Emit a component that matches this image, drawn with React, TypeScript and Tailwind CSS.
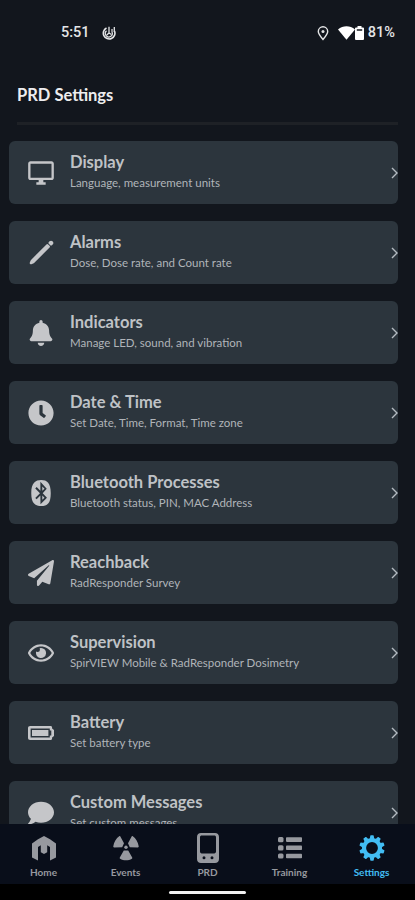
import type { ComponentType, ReactNode } from "react";
import {
  FaBell,
  FaBluetooth,
  FaClock,
  FaComment,
  FaPaperPlane,
  FaRegEye,
} from "react-icons/fa";
import { IoPencil } from "react-icons/io5";
import { MdOutlineDesktopWindows } from "react-icons/md";

interface IconProps {
  className?: string;
}

interface SettingsItem {
  title: string;
  subtitle: string;
  icon: ComponentType<IconProps>;
  iconClass: string;
  titleClass: string;
  subtitleClass: string;
}

function BatteryIcon({ className }: IconProps) {
  return (
    <svg viewBox="0 0 26 14" className={className} fill="currentColor">
      <path
        fillRule="evenodd"
        d="M2.2 0h20.2c1.2 0 1.7.6 1.7 1.8v.8L26 4v6l-1.900 1.400v.8c0 1.200-.5 1.800-1.700 1.800H2.200C.8 14 0 13.200 0 11.800V2.200C0 .8.800 0 2.200 0Zm.4 2.400v9.200h19.200V9.500h1.500v-5h-1.500V2.400Z"
      />
      <path d="M4 4h16.400v6H4z" />
    </svg>
  );
}

function HomeIcon() {
  return (
    <svg viewBox="0 0 24 25" className="h-[25px] w-6" fill="currentColor">
      <path d="M12 0 18 3.200 24 7.500V21.500L18 24.500V11L15.200 9.200V16.200L12 18 8.800 16.200V9.200L6 11V24.500L0 21.500V7.500L6 3.200Z" />
    </svg>
  );
}

function RadiationIcon() {
  return (
    <svg viewBox="0 0 26 26" className="size-[26px]" fill="currentColor">
      <path d="M7.200 1.200 11 8.300 9.200 12.300 1.200 12.500C.4 12.500.2 12 .3 11.300.9 7 3.200 3.300 6.200 1.200c.4-.3.8-.3 1 0Z" />
      <path d="M18.800 1.200 15 8.300 16.800 12.300 24.800 12.500c.8 0 1-.5.9-1.200C25.100 7 22.800 3.300 19.800 1.200c-.4-.3-.8-.3-1 0Z" />
      <path d="M10.800 15.600h4.400l4 6.900c.3.500.1.900-.3 1.200-3.500 2.200-8.300 2.200-11.800 0-.4-.3-.6-.7-.3-1.200Z" />
      <circle cx="13" cy="12.200" r="1.700" />
    </svg>
  );
}

function DeviceIcon() {
  return (
    <svg viewBox="0 0 22 30" className="h-[30px] w-[22px]" fill="currentColor">
      <path
        fillRule="evenodd"
        d="M4 0h14c2.400 0 4 1.600 4 4v22c0 2.400-1.600 4-4 4H4c-2.400 0-4-1.600-4-4V4C0 1.600 1.600 0 4 0Zm.8 2.600C3.600 2.600 3 3.200 3 4.400v14.200c0 1.200.6 1.800 1.800 1.800h12.400c1.200 0 1.800-.6 1.800-1.800V4.400c0-1.200-.6-1.800-1.800-1.800ZM5.500 24.800a1.500 1.500 0 1 0 3 0 1.500 1.500 0 1 0-3 0Zm8 0a1.500 1.500 0 1 0 3 0 1.500 1.500 0 1 0-3 0Z"
      />
    </svg>
  );
}

function ListIcon() {
  return (
    <svg viewBox="0 0 24 22" className="h-[22px] w-6" fill="currentColor">
      {[0, 8.200, 16.400].map((y) => (
        <g key={y}>
          <rect x="0" y={y} width="5.500" height="5.200" rx="1.500" />
          <rect x="8" y={y + 0.300} width="16" height="4.600" rx="0.800" />
        </g>
      ))}
    </svg>
  );
}

function GearIcon() {
  const teeth = Array.from({ length: 10 }, (_, i) => i * 36);
  return (
    <svg viewBox="-13 -13 26 26" className="size-[26px]" fill="currentColor">
      <circle r="8" fill="none" stroke="currentColor" strokeWidth="4.200" />
      {teeth.map((angle) => (
        <path
          key={angle}
          d="M-2.300-9-1.700-12.300Q-1.600-12.700-1.200-12.700H1.200Q1.600-12.700 1.700-12.300L2.300-9Z"
          transform={`rotate(${angle})`}
        />
      ))}
    </svg>
  );
}

const items: SettingsItem[] = [
  {
    title: "Display",
    subtitle: "Language, measurement units",
    icon: MdOutlineDesktopWindows,
    iconClass: "size-7",
    titleClass: "",
    subtitleClass: "",
  },
  {
    title: "Alarms",
    subtitle: "Dose, Dose rate, and Count rate",
    icon: IoPencil,
    iconClass: "size-[29px]",
    titleClass: "",
    subtitleClass: "",
  },
  {
    title: "Indicators",
    subtitle: "Manage LED, sound, and vibration",
    icon: FaBell,
    iconClass: "size-[26px]",
    titleClass: "",
    subtitleClass: "",
  },
  {
    title: "Date & Time",
    subtitle: "Set Date, Time, Format, Time zone",
    icon: FaClock,
    iconClass: "size-[26px]",
    titleClass: "",
    subtitleClass: "",
  },
  {
    title: "Bluetooth Processes",
    subtitle: "Bluetooth status, PIN, MAC Address",
    icon: FaBluetooth,
    iconClass: "size-[26px]",
    titleClass: "",
    subtitleClass: "",
  },
  {
    title: "Reachback",
    subtitle: "RadResponder Survey",
    icon: FaPaperPlane,
    iconClass: "size-[26px]",
    titleClass: "",
    subtitleClass: "",
  },
  {
    title: "Supervision",
    subtitle: "SpirVIEW Mobile & RadResponder Dosimetry",
    icon: FaRegEye,
    iconClass: "size-[26px]",
    titleClass: "",
    subtitleClass: "",
  },
  {
    title: "Battery",
    subtitle: "Set battery type",
    icon: BatteryIcon,
    iconClass: "h-[14px] w-[26px]",
    titleClass: "",
    subtitleClass: "",
  },
  {
    title: "Custom Messages",
    subtitle: "Set custom messages",
    icon: FaComment,
    iconClass: "size-[26px]",
    titleClass: "",
    subtitleClass: "",
  },
];

function StatusBar() {
  return (
    <div className="flex h-[66px] shrink-0 items-center pl-[61px] pr-5 font-['Roboto',sans-serif] text-[14.500px] font-medium text-[#e4e5e7]">
      <span>5:51</span>
      <svg viewBox="0 0 14 14" className="ml-3 size-[14px]" fill="none" stroke="currentColor">
        <path d="M4.500 2A5.800 5.800 0 1 0 12.500 5" strokeWidth="1.600" />
        <path d="M4.500 4.800A3.500 3.500 0 1 0 10 6V3" strokeWidth="1.200" />
        <path d="M7 .8V7L4.800 9M7 7l2.500 1.500M12.300 1v5" strokeWidth="1.300" />
      </svg>
      <svg viewBox="0 0 12 15" className="ml-auto h-[15px] w-3" fill="none" stroke="currentColor">
        <path d="M6 13.500C3.500 10.500 1.300 8 1.300 5.500a4.700 4.700 0 0 1 9.400 0C10.700 8 8.500 10.500 6 13.500Z" strokeWidth="1.400" />
        <circle cx="6" cy="5.600" r="1.500" fill="currentColor" stroke="none" />
      </svg>
      <svg viewBox="0 0 17 14" className="ml-[9px] h-[14px] w-[17px]" fill="#fff">
        <path d="M0 3.400C5-.9 12-.9 17 3.400L8.500 13.700Z" />
      </svg>
      <svg viewBox="0 0 9 14" className="ml-1.500 h-[14px] w-[9px]" fill="#fff">
        <path fillRule="evenodd" d="M2.500 0h4v1.400H8q1 0 1 1V13q0 1-1 1H1q-1 0-1-1V2.400q0-1 1-1h1.500ZM1.800 3.300v1.400h5.400V3.300Z" />
      </svg>
      <span className="ml-1">81%</span>
    </div>
  );
}

function SettingsCard({ item }: { item: SettingsItem }) {
  const Icon = item.icon;
  return (
    <button className="flex h-[63px] w-full shrink-0 items-center rounded-md bg-[#2c353d] text-left">
      <span className="flex w-[61px] shrink-0 items-center justify-center pl-[3px] text-[#c5c6c9]">
        <Icon className={item.iconClass} />
      </span>
      <span className="flex grow flex-col whitespace-nowrap">
        <span className={`text-[16.500px] leading-[21px] font-bold text-[#bfc2c6] ${item.titleClass}`}>
          {item.title}
        </span>
        <span className={`text-[11.500px] leading-5 text-[#b0b4b9] ${item.subtitleClass}`}>
          {item.subtitle}
        </span>
      </span>
      <svg viewBox="0 0 7 12" className="mr-2.500 h-3 w-[7px] text-[#b4bbc1]" fill="none" stroke="currentColor" strokeWidth="1.400">
        <path d="m1 1 5 5-5 5" />
      </svg>
    </button>
  );
}

function NavItem({ label, active, children }: { label: string; active?: boolean; children: ReactNode }) {
  return (
    <button
      className={`flex w-[82px] flex-col items-center ${active ? "text-[#42bdf3]" : "text-[#97999f]"}`}
    >
      <span className="flex h-[41px] items-end justify-center">
        <span className="flex h-[34px] items-center">{children}</span>
      </span>
      <span className="text-[10px] leading-[14px] font-bold">{label}</span>
    </button>
  );
}

export default function App() {
  return (
    <div className="flex h-[900px] w-[415px] flex-col overflow-hidden bg-[#12161d] font-['Lato',sans-serif]">
      <StatusBar />

      <header className="flex h-[75px] shrink-0 flex-col px-[17px]">
        <h1 className="mt-[18px] text-[16.500px] leading-[22px] font-bold text-[#ededef]">PRD Settings</h1>
        <div className="mt-4 h-[3px] bg-[#1e2126]" />
      </header>

      <main className="flex min-h-0 grow flex-col gap-[17px] overflow-hidden pl-[9px] pr-[17px]">
        {items.map((item) => (
          <SettingsCard key={item.title} item={item} />
        ))}
      </main>

      {/* Bottom navigation */}
      <nav className="flex h-[60px] shrink-0 justify-center bg-[#090e1a]">
        <NavItem label="Home">
          <HomeIcon />
        </NavItem>
        <NavItem label="Events">
          <RadiationIcon />
        </NavItem>
        <NavItem label="PRD">
          <DeviceIcon />
        </NavItem>
        <NavItem label="Training">
          <ListIcon />
        </NavItem>
        <NavItem label="Settings" active>
          <GearIcon />
        </NavItem>
      </nav>

      <div className="flex h-4 shrink-0 items-center justify-center bg-black">
        <div className="h-[3px] w-[77px] rounded-full bg-[#f2f2f2]" />
      </div>
    </div>
  );
}
